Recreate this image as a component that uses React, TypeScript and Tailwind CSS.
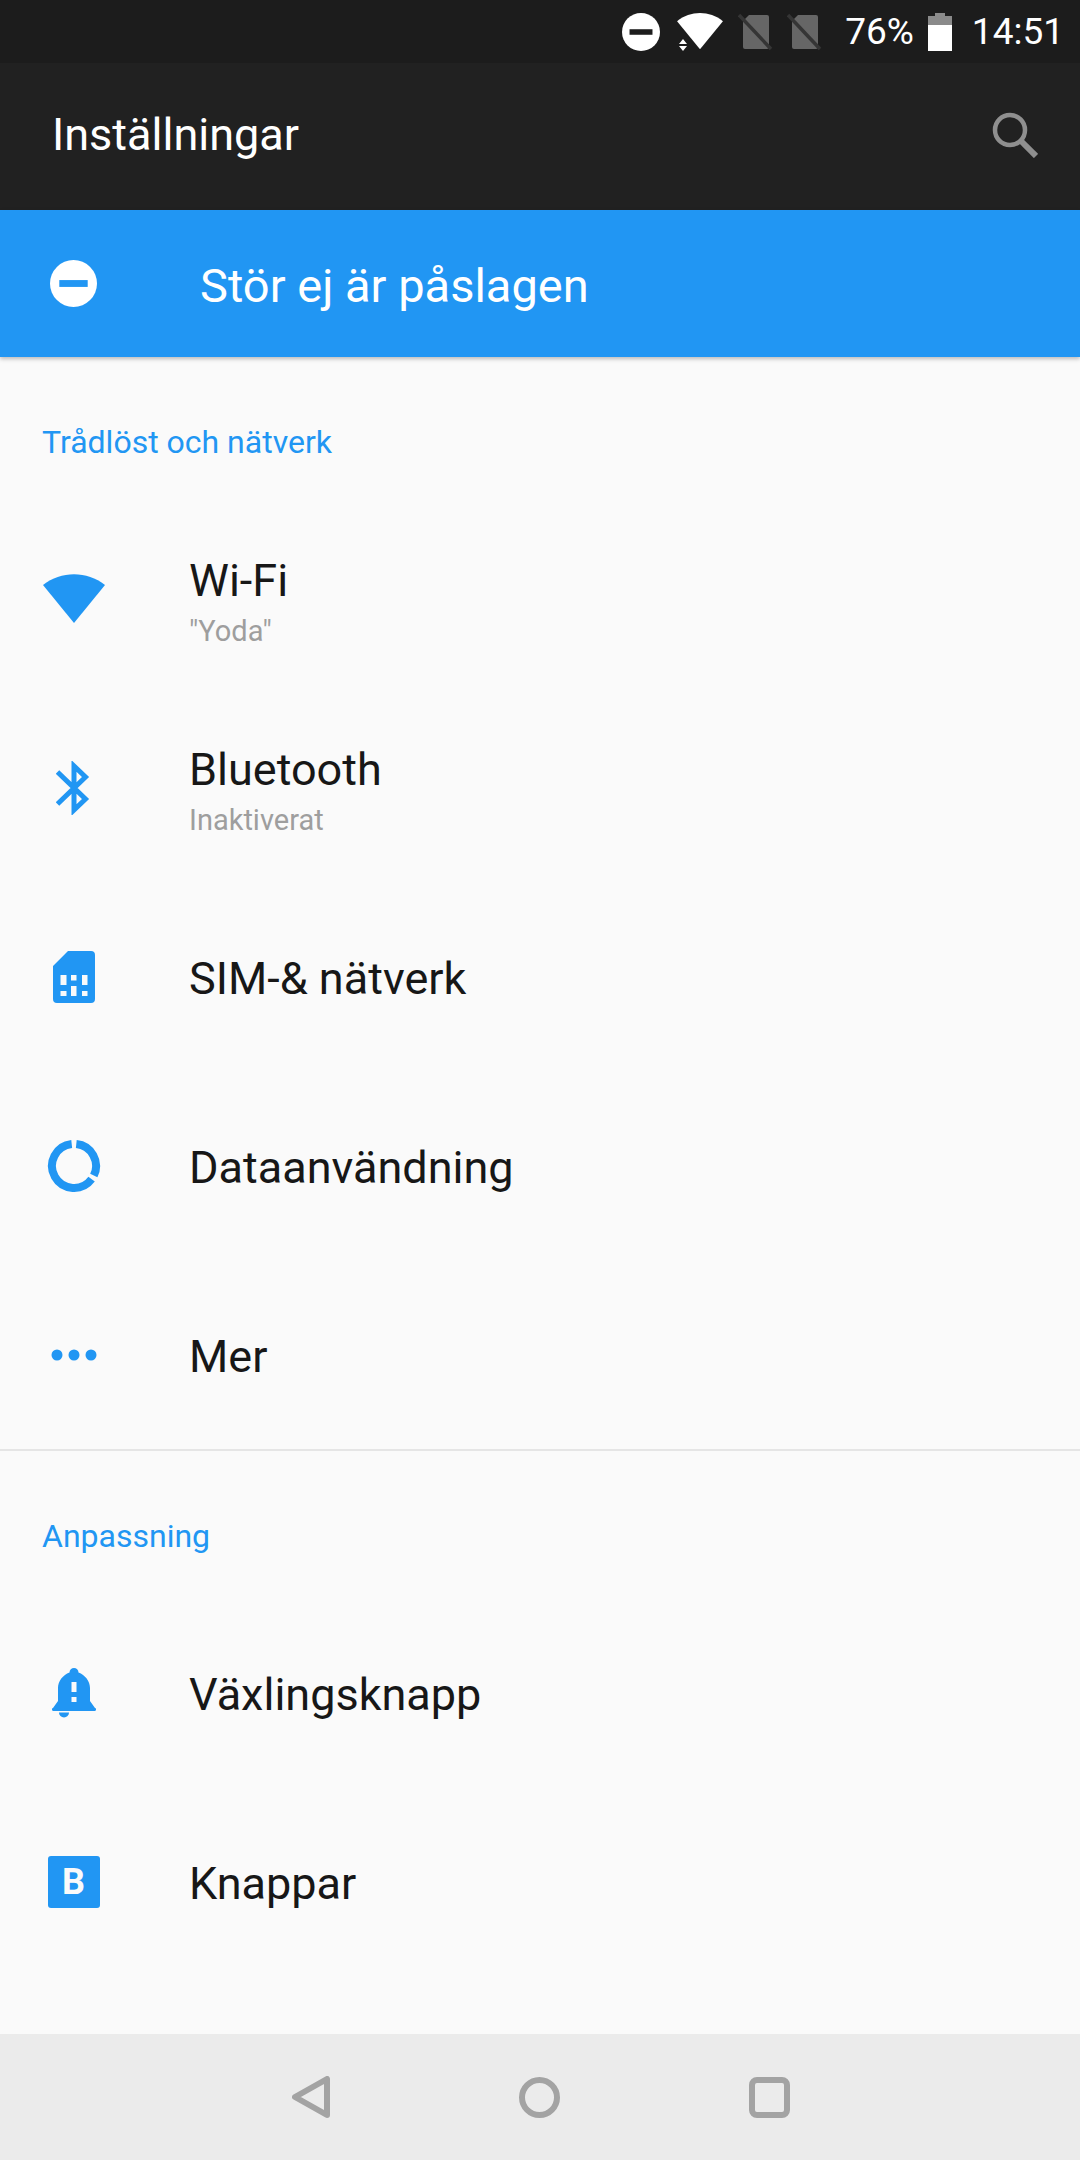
const blue = "#2196f3";

const WifiIcon = ({ className, fill }: { className: string; fill: string }) => (
  <svg viewBox="0 0 62 50" className={className}>
    <path d="M0 11 C18 -3.5 44 -3.5 62 11 L31 49 Z" fill={fill} />
  </svg>
);

const DndIcon = ({ size, minus }: { size: number; minus: string }) => (
  <svg viewBox="0 0 48 48" width={size} height={size}>
    <circle cx="24" cy="24" r="24" fill="#fff" />
    <rect x="9.5" y="20.5" width="29" height="7" fill={minus} />
  </svg>
);

const NoSim = () => (
  <svg viewBox="0 0 36 38" className="h-[38px] w-[36px]">
    <path d="M11 2 H29 a2 2 0 0 1 2 2 V34 a2 2 0 0 1 -2 2 H7 a2 2 0 0 1 -2 -2 V8 Z" fill="#666" />
    <path d="M1 2 L33 36" stroke="#353535" strokeWidth="3.5" />
  </svg>
);

const Battery = () => (
  <svg viewBox="0 0 24 38" className="h-[38px] w-[24px]">
    <path d="M7 0 H17 V3 H24 V12 H0 V3 H7 Z" fill="#8a8a8a" />
    <rect x="0" y="12" width="24" height="26" fill="#fff" />
  </svg>
);

const SearchIcon = () => (
  <svg viewBox="0 0 46 46" className="h-[46px] w-[46px]" fill="none" stroke="#8f8f8f">
    <circle cx="18" cy="18" r="15" strokeWidth="4.5" />
    <path d="M29 29 L44 44" strokeWidth="6" />
  </svg>
);

const BluetoothIcon = () => (
  <svg viewBox="0 0 36 54" className="h-[54px] w-[36px]" fill="none" stroke={blue} strokeWidth="5">
    <path d="M1.5 11 L29.5 38 L18 49 V5 L29.5 16 L1.5 43" />
  </svg>
);

const SimIcon = () => (
  <svg viewBox="0 0 42 52" className="h-[52px] w-[42px]">
    <path
      fillRule="evenodd"
      fill={blue}
      d="M15 0 H38 a4 4 0 0 1 4 4 V48 a4 4 0 0 1 -4 4 H4 a4 4 0 0 1 -4 -4 V15 Z M7.5 24 h6 v10 h-6 Z M18 24 h5.5 v5.5 h-5.5 Z M29 24 h5.5 v10 h-5.5 Z M7.5 40 h6 v5 h-6 Z M18 35 h5.5 v10 h-5.5 Z M29 40 h5.5 v5 h-5.5 Z"
    />
  </svg>
);

const DataIcon = () => (
  <svg viewBox="0 0 54 54" className="h-[54px] w-[54px]" fill="none" stroke={blue} strokeWidth="8">
    <path d="M24.7 5.1 A22 22 0 1 0 44.6 40.2" />
    <path d="M29.3 5.1 A22 22 0 0 1 46.8 36.6" />
  </svg>
);

const DotsIcon = () => (
  <svg viewBox="0 0 46 12" className="h-[12px] w-[46px]" fill={blue}>
    <circle cx="6" cy="6" r="5.5" />
    <circle cx="23" cy="6" r="5.5" />
    <circle cx="40" cy="6" r="5.5" />
  </svg>
);

const BellIcon = () => (
  <svg viewBox="0 0 44 50" className="h-[50px] w-[44px]">
    <path
      fillRule="evenodd"
      fill={blue}
      d="M22 0 a4.5 4.5 0 0 1 4.5 4.5 C33 7 38 13 38 20 V33 L43 40 a1.5 1.5 0 0 1 -1 3 H2 a1.5 1.5 0 0 1 -1 -3 L6 33 V20 C6 13 11 7 17.5 4.5 A4.5 4.5 0 0 1 22 0 Z M19.5 14 h5 v10 h-5 Z M19.5 29 h5 v5 h-5 Z"
    />
    <path d="M7 44.5 H17 A5 5 0 0 1 7 44.5 Z" fill={blue} />
  </svg>
);

const ButtonsIcon = () => (
  <div className="flex h-[52px] w-[52px] items-center justify-center rounded-[3px] bg-[#2196f3] text-[36px] font-bold text-[#fafafa]">
    B
  </div>
);

const WifiBlue = () => <WifiIcon className="h-[50px] w-[62px]" fill={blue} />;

const Row = ({ icon, title, sub }: { icon: React.ReactNode; title: string; sub?: string }) => (
  <div className="flex h-[189px] items-center">
    <div className="flex w-[147px] shrink-0 justify-center">{icon}</div>
    <div className="ml-[42px]">
      <div className={`text-[45px] text-[#171717] ${sub ? "leading-[64px]" : "leading-[60px] pt-[4px]"}`}>{title}</div>
      {sub && <div className="text-[29px] leading-[36px] text-[#9e9e9e]">{sub}</div>}
    </div>
  </div>
);

export default function App() {
  return (
    <div className="flex h-[2160px] w-[1080px] flex-col overflow-hidden bg-[#fafafa] font-['Roboto',sans-serif]">
      {/* status bar */}
      <div className="flex h-[63px] shrink-0 items-center justify-end bg-[#1c1c1c] pr-[16px] text-[37px] text-white">
        <DndIcon size={38} minus="#1c1c1c" />
        <div className="relative ml-[17px] mt-[-1px]">
          <WifiIcon className="h-[37px] w-[46px]" fill="#fff" />
          {/* data arrows */}
          <svg viewBox="0 0 8 12" className="absolute bottom-[-1px] left-[2px] h-[12px] w-[8px]" fill="#fff">
            <path d="M4 0 L8 5 H0 Z M4 12 L8 7 H0 Z" />
          </svg>
        </div>
        <div className="ml-[15px] flex gap-[13px]">
          <NoSim />
          <NoSim />
        </div>
        <span className="ml-[22px]">76%</span>
        <div className="ml-[14px]">
          <Battery />
        </div>
        <span className="ml-[20px]">14:51</span>
      </div>

      {/* app bar */}
      <div className="flex h-[147px] shrink-0 items-center justify-between bg-[#212121] pb-[3px] pl-[52px] pr-[42px]">
        <span className="text-[45px] text-white">Inställningar</span>
        <SearchIcon />
      </div>

      {/* do not disturb banner */}
      <div className="relative flex h-[147px] shrink-0 items-center bg-[#2196f3] shadow-[0_2px_4px_rgba(0,0,0,0.25)]">
        <div className="flex w-[147px] justify-center">
          <DndIcon size={47} minus={blue} />
        </div>
        <span className="ml-[53px] pt-[5px] text-[47px] text-white">Stör ej är påslagen</span>
      </div>

      {/* settings list */}
      <div className="flex-1">
        <div className="flex h-[147px] items-center pl-[42px] pt-[22px] text-[32px] text-[#2196f3]">
          Trådlöst och nätverk
        </div>
        <Row icon={<WifiBlue />} title="Wi-Fi" sub={'"Yoda"'} />
        <Row icon={<BluetoothIcon />} title="Bluetooth" sub="Inaktiverat" />
        <Row icon={<SimIcon />} title="SIM-& nätverk" />
        <Row icon={<DataIcon />} title="Dataanvändning" />
        <Row icon={<DotsIcon />} title="Mer" />
        <div className="h-[2px] bg-[#e5e5e5]" />
        <div className="flex h-[147px] items-center pl-[42px] pt-[22px] text-[32px] text-[#2196f3]">
          Anpassning
        </div>
        <Row icon={<BellIcon />} title="Växlingsknapp" />
        <Row icon={<ButtonsIcon />} title="Knappar" />
      </div>

      {/* nav bar */}
      <div className="flex h-[126px] shrink-0 items-center justify-center gap-[189px] bg-[#ebebeb] pl-[2px]">
        <svg viewBox="0 0 38 42" className="h-[42px] w-[38px]" fill="none" stroke="#a3a3a3" strokeWidth="6" strokeLinejoin="round">
          <path d="M3 21 L35 3 V39 Z" />
        </svg>
        <svg viewBox="0 0 41 41" className="h-[41px] w-[41px]" fill="none" stroke="#a3a3a3" strokeWidth="6">
          <circle cx="20.5" cy="20.5" r="17.5" />
        </svg>
        <svg viewBox="0 0 41 41" className="h-[41px] w-[41px]" fill="none" stroke="#a3a3a3" strokeWidth="6">
          <rect x="3" y="3" width="35" height="35" rx="5" />
        </svg>
      </div>
    </div>
  );
}
